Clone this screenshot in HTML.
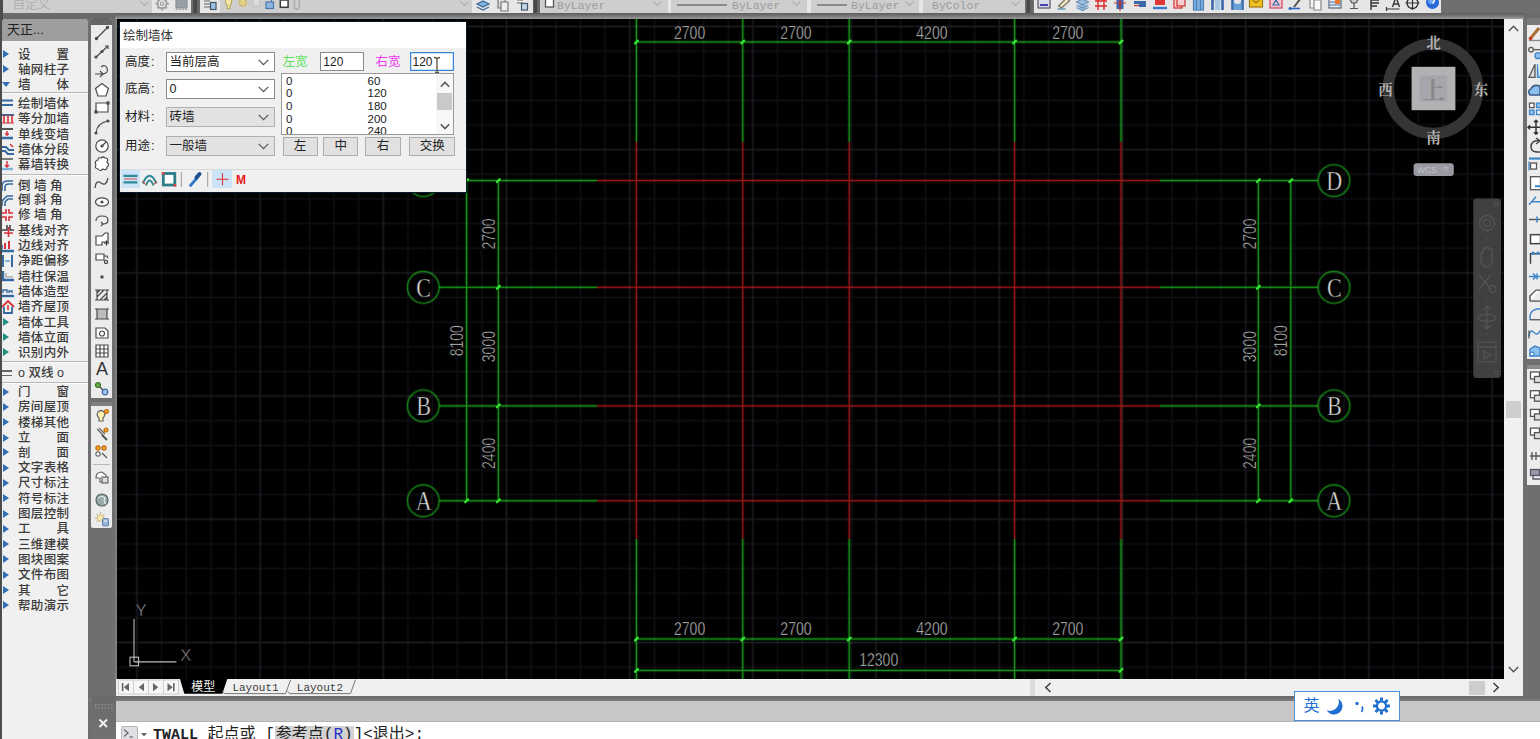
<!DOCTYPE html>
<html lang="zh"><head><meta charset="utf-8"><title>绘制墙体</title>
<style>
html,body{margin:0;padding:0}
body{width:1540px;height:739px;overflow:hidden;position:relative;background:#6f6f6f;font-family:"Liberation Sans","Noto Sans CJK SC",sans-serif;font-size:12.5px;color:#222}
.abs{position:absolute}
#top{left:0;top:0;width:1540px;height:13px;background:#6f6f6f;overflow:hidden}
#top .seg{position:absolute;top:0;height:13px}
#top .t{position:absolute;top:-1.5px;font-family:"Liberation Mono",monospace;font-size:11.5px;color:#9c9c9c;line-height:13px;white-space:nowrap}
#lp{left:2px;top:19px;width:86px;height:720px;background:#f0f0f0;border-radius:4px 4px 0 0;overflow:hidden}
#lp .title{position:absolute;left:0;top:0;width:86px;height:22px;background:#9e9e9e;color:#222;font-size:13px;line-height:22px;text-indent:5px}
#lp .it{position:absolute;left:16px;width:51px;height:15px;line-height:15px;font-size:12.5px;color:#3c3c3c;font-weight:500;white-space:nowrap;text-align:justify;text-align-last:justify}
#lp .sep{position:absolute;left:0;width:86px;height:1px;background:#b8b8b8;border-bottom:1px solid #fafafa}
#lp .ar{position:absolute;left:1px;width:0;height:0;border-left:6px solid #2f6fb5;border-top:4px solid transparent;border-bottom:4px solid transparent}
#lp .ad{position:absolute;left:0px;width:0;height:0;border-top:5px solid #2f6fb5;border-left:4.5px solid transparent;border-right:4.5px solid transparent}
#vt{left:91px;top:17.500px;width:21px;height:510.500px;background:#ececec;border-radius:2px}
#dlg{left:120px;top:22px;width:346px;height:170px;background:#f0f0f0;overflow:hidden;box-shadow:0 0 0 1px #0a1a2a}
#dlg .ttl{position:absolute;left:0;top:0;width:346px;height:26px;background:#fff;font-size:12.5px;line-height:28px;text-indent:3px;color:#333}
#dlg .lb{position:absolute;left:5px;font-size:12.5px;line-height:20px;color:#222;white-space:nowrap}
#dlg .cb{position:absolute;left:46px;width:107px;height:18px;border:1px solid #8a8a8a;background:#fff;font-size:12.5px;line-height:18px;text-indent:2.5px;color:#222;white-space:nowrap}
#dlg .cb.g{background:#e2e2e2;border-color:#b0b0b0}
#dlg .cb svg{position:absolute;right:5px;top:6px}
#dlg .in{position:absolute;top:30px;width:42px;height:17px;border:1px solid #8a8a8a;background:#fff;font-size:12px;line-height:19px;text-indent:2px}
#dlg .bt{position:absolute;top:115px;height:17px;border:1px solid #adadad;background:#e1e1e1;font-size:12.5px;line-height:17px;text-align:center;color:#222}
#lst{position:absolute;left:161px;top:51px;width:171px;height:60px;background:#fff;border:1px solid #9a9a9a;overflow:hidden;font-size:11.5px;color:#222}
#lst div.r{position:absolute;left:4px;height:13px;line-height:13px;white-space:pre}
#cmd{left:116px;top:722px;width:1424px;height:17px;background:#fff;overflow:hidden}
#cmd .tx{position:absolute;left:37px;top:2.600px;font-family:"Liberation Mono","Noto Sans CJK SC",monospace;font-size:16px;line-height:20px;color:#222;white-space:nowrap}
</style></head><body>

<div id="top" class="abs">
<div class="seg" style="left:0px;width:2.5px;background:#4c4c4c"></div>
<div class="seg" style="left:2.5px;width:149.5px;background:#cecece"><span class="t" style="left:10px;font-family:'Liberation Sans','Noto Sans CJK SC',sans-serif;font-size:12.5px;color:#b0b0b0">自定义</span><svg class="abs" style="left:137px;top:1px" width="9" height="6" viewBox="0 0 9 6"><path d="M0.5 0.5L4.5 4.5L8.5 0.5" fill="none" stroke="#b0b0b0" stroke-width="1.2"/></svg></div>
<div class="seg" style="left:152px;width:39px;background:#e6e6e6"></div>
<div class="seg" style="left:200px;width:20px;background:#e6e6e6"></div>
<div class="seg" style="left:220px;width:252px;background:#cecece"><span class="t" style="left:72.500px;top:-2.500px;color:#a6a6a6;font-size:16px;font-family:'Liberation Sans',sans-serif;transform:scaleX(0.85);transform-origin:0 0">0</span><svg class="abs" style="left:240px;top:1px" width="9" height="6" viewBox="0 0 9 6"><path d="M0.5 0.5L4.5 4.5L8.5 0.5" fill="none" stroke="#b0b0b0" stroke-width="1.2"/></svg></div>
<div class="seg" style="left:472px;width:60.5px;background:#e6e6e6"></div>
<div class="seg" style="left:540px;width:127.5px;background:#cecece"><span class="t" style="left:17px">ByLayer</span><svg class="abs" style="left:113px;top:1px" width="9" height="6" viewBox="0 0 9 6"><path d="M0.5 0.5L4.5 4.5L8.5 0.5" fill="none" stroke="#b0b0b0" stroke-width="1.2"/></svg></div>
<div class="seg" style="left:667.5px;width:3.5px;background:#e6e6e6"></div>
<div class="seg" style="left:671px;width:136px;background:#cecece"><span class="t" style="left:61px">ByLayer</span><svg class="abs" style="left:121px;top:1px" width="9" height="6" viewBox="0 0 9 6"><path d="M0.5 0.5L4.5 4.5L8.5 0.5" fill="none" stroke="#b0b0b0" stroke-width="1.2"/></svg><div class="abs" style="left:6px;top:4px;width:50px;height:1.5px;background:#8a8a8a"></div></div>
<div class="seg" style="left:807px;width:4px;background:#e6e6e6"></div>
<div class="seg" style="left:811px;width:108px;background:#cecece"><span class="t" style="left:40px">ByLayer</span><svg class="abs" style="left:94px;top:1px" width="9" height="6" viewBox="0 0 9 6"><path d="M0.5 0.5L4.5 4.5L8.5 0.5" fill="none" stroke="#b0b0b0" stroke-width="1.2"/></svg><div class="abs" style="left:6px;top:4px;width:30px;height:1.5px;background:#8a8a8a"></div></div>
<div class="seg" style="left:919px;width:4px;background:#e6e6e6"></div>
<div class="seg" style="left:923px;width:102px;background:#cecece"><span class="t" style="left:9px">ByColor</span><svg class="abs" style="left:88px;top:1px" width="9" height="6" viewBox="0 0 9 6"><path d="M0.5 0.5L4.5 4.5L8.5 0.5" fill="none" stroke="#b0b0b0" stroke-width="1.2"/></svg></div>
<div class="seg" style="left:1033.5px;width:407.5px;background:#e6e6e6"></div>
</div>
<div class="abs" style="left:0;top:13px;width:1540px;height:6px;background:#6a6a6a"></div>
<div class="abs" style="left:115px;top:13px;width:1409px;height:6px;background:linear-gradient(#5c5c5c,#767676 50%,#9c9c9c)"></div>
<div class="abs" style="left:115px;top:19px;width:2.400px;height:660px;background:#7e7e7e"></div>
<div class="abs" style="left:0;top:13px;width:2.5px;height:726px;background:#4c4c4c"></div>
<div id="lp" class="abs"><div class="title">天正...</div>
<div class="it" style="top:28.5px">设置</div>
<div class="ar" style="top:31px"></div>
<div class="it" style="top:43.7px">轴网柱子</div>
<div class="ar" style="top:46.2px"></div>
<div class="it" style="top:58.9px">墙体</div>
<div class="ad" style="top:63.4px"></div>
<div class="it" style="top:77.5px">绘制墙体</div>
<div class="it" style="top:93px">等分加墙</div>
<div class="it" style="top:108.5px">单线变墙</div>
<div class="it" style="top:123.7px">墙体分段</div>
<div class="it" style="top:138.9px">幕墙转换</div>
<div class="it" style="top:159.5px;text-align:left;text-align-last:left;width:60px">倒 墙 角</div>
<div class="it" style="top:174.3px;text-align:left;text-align-last:left;width:60px">倒 斜 角</div>
<div class="it" style="top:189.3px;text-align:left;text-align-last:left;width:60px">修 墙 角</div>
<div class="it" style="top:205px">基线对齐</div>
<div class="it" style="top:220.3px">边线对齐</div>
<div class="it" style="top:235.2px">净距偏移</div>
<div class="it" style="top:250.8px">墙柱保温</div>
<div class="it" style="top:266px">墙体造型</div>
<div class="it" style="top:281.1px">墙齐屋顶</div>
<div class="it" style="top:296.5px">墙体工具</div>
<div class="ar" style="top:299px;border-left-color:#1f8f80"></div>
<div class="it" style="top:311.8px">墙体立面</div>
<div class="ar" style="top:314.3px;border-left-color:#1f8f80"></div>
<div class="it" style="top:326.9px">识别内外</div>
<div class="ar" style="top:329.4px;border-left-color:#1f8f80"></div>
<div class="it" style="top:366.3px">门窗</div>
<div class="ar" style="top:368.8px"></div>
<div class="it" style="top:381.4px">房间屋顶</div>
<div class="ar" style="top:383.9px"></div>
<div class="it" style="top:396.5px">楼梯其他</div>
<div class="ar" style="top:399px"></div>
<div class="it" style="top:412px">立面</div>
<div class="ar" style="top:414.5px"></div>
<div class="it" style="top:426.7px">剖面</div>
<div class="ar" style="top:429.2px"></div>
<div class="it" style="top:442px">文字表格</div>
<div class="ar" style="top:444.5px"></div>
<div class="it" style="top:457.4px">尺寸标注</div>
<div class="ar" style="top:459.9px"></div>
<div class="it" style="top:472.8px">符号标注</div>
<div class="ar" style="top:475.3px"></div>
<div class="it" style="top:488.2px">图层控制</div>
<div class="ar" style="top:490.7px"></div>
<div class="it" style="top:503.2px">工具</div>
<div class="ar" style="top:505.7px"></div>
<div class="it" style="top:518.5px">三维建模</div>
<div class="ar" style="top:521px"></div>
<div class="it" style="top:533.9px">图块图案</div>
<div class="ar" style="top:536.4px"></div>
<div class="it" style="top:549.3px">文件布图</div>
<div class="ar" style="top:551.8px"></div>
<div class="it" style="top:564.7px">其它</div>
<div class="ar" style="top:567.2px"></div>
<div class="it" style="top:579.7px">帮助演示</div>
<div class="ar" style="top:582.2px"></div>
<div class="it" style="top:347.2px;left:16px;width:66px;text-align:left;text-align-last:left">o 双线 o</div>
<div class="abs" style="left:0;top:351px;width:10px;height:1.5px;background:#666"></div><div class="abs" style="left:0;top:355.5px;width:10px;height:1.5px;background:#666"></div>
<div class="sep" style="top:72.5px"></div>
<div class="sep" style="top:155px"></div>
<div class="sep" style="top:341.5px"></div>
<div class="sep" style="top:362.5px"></div>
<svg class="abs" style="left:-1px;top:77px" width="16" height="14" viewBox="0 0 16 14"><path d="M0 4.5H12M0 9H12" stroke="#35699f" stroke-width="2.2"/></svg>
<svg class="abs" style="left:-1px;top:92.5px" width="16" height="14" viewBox="0 0 16 14"><path d="M0 3H13" stroke="#35699f" stroke-width="2"/><path d="M3 3V11M7 3V11M11 3V11" stroke="#d8303a" stroke-width="1.6"/><path d="M0 11H13" stroke="#d8303a" stroke-width="1.2"/></svg>
<svg class="abs" style="left:-1px;top:108px" width="16" height="14" viewBox="0 0 16 14"><path d="M0 2H12" stroke="#222" stroke-width="1.6"/><path d="M0 11H12" stroke="#35699f" stroke-width="2.4"/><path d="M6 4V9M4 7H8" stroke="#d8303a" stroke-width="1.4"/></svg>
<svg class="abs" style="left:-1px;top:123.2px" width="16" height="14" viewBox="0 0 16 14"><path d="M0 5H5L8 8H13M0 9H4L7 12H13" stroke="#35699f" stroke-width="2" fill="none"/><path d="M9 2L12 5" stroke="#d8303a" stroke-width="1.4"/></svg>
<svg class="abs" style="left:-1px;top:138.4px" width="16" height="14" viewBox="0 0 16 14"><path d="M0 2H12" stroke="#555" stroke-width="1.6"/><path d="M0 12H12" stroke="#7fb4d8" stroke-width="2.4"/><path d="M6 4V10M4 8L6 10L8 8" stroke="#d8303a" stroke-width="1.4" fill="none"/></svg>
<svg class="abs" style="left:-1px;top:159px" width="16" height="14" viewBox="0 0 16 14"><path d="M1 13V8Q1 3 7 3H12M4 13V9Q4 6 8 6H12" stroke="#35699f" stroke-width="1.6" fill="none"/></svg>
<svg class="abs" style="left:-1px;top:173.8px" width="16" height="14" viewBox="0 0 16 14"><path d="M1 13V8L6 3H12M4 13V9L7 6H12" stroke="#35699f" stroke-width="1.6" fill="none"/></svg>
<svg class="abs" style="left:-1px;top:188.8px" width="16" height="14" viewBox="0 0 16 14"><path d="M0 5H5V1M8 1V5H12M0 9H5V13M8 13V9H12" stroke="#d8303a" stroke-width="1.6" fill="none"/></svg>
<svg class="abs" style="left:-1px;top:204.5px" width="16" height="14" viewBox="0 0 16 14"><path d="M0 6H6V1M9 1V6H13" stroke="#444" stroke-width="1.6" fill="none"/><path d="M7.5 3V13M3 9H12" stroke="#d8303a" stroke-width="1.6"/></svg>
<svg class="abs" style="left:-1px;top:219.8px" width="16" height="14" viewBox="0 0 16 14"><path d="M0 12H13" stroke="#35699f" stroke-width="2.4"/><path d="M4 4V10M8 2V10" stroke="#d8303a" stroke-width="2"/><path d="M1 6V10" stroke="#35699f" stroke-width="1.6"/></svg>
<svg class="abs" style="left:-1px;top:234.7px" width="16" height="14" viewBox="0 0 16 14"><path d="M2 1V13M11 1V13" stroke="#35699f" stroke-width="2"/><path d="M4 7H9" stroke="#6aa8d8" stroke-width="1.6"/></svg>
<svg class="abs" style="left:-1px;top:250.3px" width="16" height="14" viewBox="0 0 16 14"><path d="M2 2V11H13" stroke="#35699f" stroke-width="2.4" fill="none"/><path d="M5 4V8H12" stroke="#b0b0b0" stroke-width="1.6" fill="none"/></svg>
<svg class="abs" style="left:-1px;top:265.5px" width="16" height="14" viewBox="0 0 16 14"><path d="M0 11H13" stroke="#35699f" stroke-width="2.4"/><path d="M2 8V5H6V8M8 8V6H11V8" stroke="#35699f" stroke-width="1.4" fill="none"/></svg>
<svg class="abs" style="left:-1px;top:280.6px" width="16" height="14" viewBox="0 0 16 14"><path d="M1 7L7 1L13 7" stroke="#d8303a" stroke-width="1.8" fill="none"/><path d="M3 7V13H11V7" stroke="#35699f" stroke-width="1.8" fill="none"/><path d="M7 5V10" stroke="#d8303a" stroke-width="1.6"/></svg>
</div>
<div id="vt" class="abs"><div class="abs" style="left:0;top:0;width:21px;height:7px;background:#666;border-radius:2px 2px 0 0"></div>
<svg class="abs" style="left:3px;top:7.9px" width="16" height="16" viewBox="0 0 16 16" fill="none" stroke="#4a4a4a" stroke-width="1.2"><path d="M2.500 13.500L13.500 2.500"/><circle cx="2.500" cy="13.500" r="1.100" fill="#444"/><circle cx="13.500" cy="2.500" r="1.100" fill="#444"/></svg>
<svg class="abs" style="left:3px;top:26.6px" width="16" height="16" viewBox="0 0 16 16" fill="none" stroke="#4a4a4a" stroke-width="1.2"><path d="M2 13L14 2"/><circle cx="2" cy="13" r="1" fill="#444"/><circle cx="8" cy="7.5" r="1" fill="#444"/><path d="M11 2H14V5"/></svg>
<svg class="abs" style="left:3px;top:45.3px" width="16" height="16" viewBox="0 0 16 16" fill="none" stroke="#4a4a4a" stroke-width="1.2"><path d="M1 11H9M6 8L9 11L6 14"/><path d="M9 11Q15 10 13 5Q11 1 7 4"/></svg>
<svg class="abs" style="left:3px;top:64px" width="16" height="16" viewBox="0 0 16 16" fill="none" stroke="#4a4a4a" stroke-width="1.2"><path d="M8 1.5L14.5 6.5L12 14H4L1.5 6.5Z" fill="#fff"/></svg>
<svg class="abs" style="left:3px;top:82.7px" width="16" height="16" viewBox="0 0 16 16" fill="none" stroke="#4a4a4a" stroke-width="1.2"><path d="M2 3H14V12H2Z" fill="#fff"/><rect x="1" y="11" width="2" height="2" fill="#444"/><rect x="13" y="2" width="2" height="2" fill="#444"/></svg>
<svg class="abs" style="left:3px;top:101.4px" width="16" height="16" viewBox="0 0 16 16" fill="none" stroke="#4a4a4a" stroke-width="1.2"><path d="M2 14Q3 4 14 2"/><circle cx="2" cy="14" r="1" fill="#444"/><circle cx="14" cy="2" r="1" fill="#444"/></svg>
<svg class="abs" style="left:3px;top:120.1px" width="16" height="16" viewBox="0 0 16 16" fill="none" stroke="#4a4a4a" stroke-width="1.2"><circle cx="8" cy="8" r="6.2" fill="#fff"/><path d="M8 8L12 4"/><circle cx="8" cy="8" r="1" fill="#444"/></svg>
<svg class="abs" style="left:3px;top:138.8px" width="16" height="16" viewBox="0 0 16 16" fill="none" stroke="#4a4a4a" stroke-width="1.2"><path d="M4 4Q4 1 7 2Q9 0 11 2Q15 2 13 6Q16 9 13 11Q13 15 9 13Q6 16 4 13Q0 12 2 9Q0 5 4 4Z" fill="#fff"/></svg>
<svg class="abs" style="left:3px;top:157.5px" width="16" height="16" viewBox="0 0 16 16" fill="none" stroke="#4a4a4a" stroke-width="1.2"><path d="M1 13Q2 4 7 8T14 3"/></svg>
<svg class="abs" style="left:3px;top:176.2px" width="16" height="16" viewBox="0 0 16 16" fill="none" stroke="#4a4a4a" stroke-width="1.2"><ellipse cx="8" cy="8" rx="6.5" ry="4.2" fill="#fff"/><circle cx="8" cy="8" r="1" fill="#444"/></svg>
<svg class="abs" style="left:3px;top:194.9px" width="16" height="16" viewBox="0 0 16 16" fill="none" stroke="#4a4a4a" stroke-width="1.2"><path d="M2 9Q2 4 8 4Q14 4 14 8Q14 12 9 12"/><path d="M7 10L9 12L7 14"/></svg>
<svg class="abs" style="left:3px;top:213.6px" width="16" height="16" viewBox="0 0 16 16" fill="none" stroke="#4a4a4a" stroke-width="1.2"><path d="M2 5H8L11 2H14V11H8V14H2Z" fill="#fff"/><path d="M10 12H15M12.5 9.5V14.5" stroke="#333"/></svg>
<svg class="abs" style="left:3px;top:232.3px" width="16" height="16" viewBox="0 0 16 16" fill="none" stroke="#4a4a4a" stroke-width="1.2"><path d="M2 4H10V10H2Z" fill="#fff"/><path d="M10 6H13L14 8"/><circle cx="12" cy="12" r="1.6"/></svg>
<svg class="abs" style="left:3px;top:251px" width="16" height="16" viewBox="0 0 16 16" fill="none" stroke="#4a4a4a" stroke-width="1.2"><circle cx="8" cy="8" r="1.1" fill="#444"/></svg>
<svg class="abs" style="left:3px;top:269.7px" width="16" height="16" viewBox="0 0 16 16" fill="none" stroke="#4a4a4a" stroke-width="1.2"><path d="M3 3H13V13H3Z M3 6L6 3M3 10L10 3M6 13L13 6M10 13L13 10"/><path d="M1 3H3M13 3H15M1 13H3M13 13H15"/></svg>
<svg class="abs" style="left:3px;top:288.4px" width="16" height="16" viewBox="0 0 16 16" fill="none" stroke="#4a4a4a" stroke-width="1.2"><path d="M3 3H13V13H3Z" fill="#bbb"/><path d="M1 3H3M13 3H15M1 13H3M13 13H15"/></svg>
<svg class="abs" style="left:3px;top:307.1px" width="16" height="16" viewBox="0 0 16 16" fill="none" stroke="#4a4a4a" stroke-width="1.2"><path d="M2 3H11L14 6V13H2Z" fill="#fff"/><circle cx="8" cy="8.5" r="2.5"/></svg>
<svg class="abs" style="left:3px;top:325.8px" width="16" height="16" viewBox="0 0 16 16" fill="none" stroke="#4a4a4a" stroke-width="1.2"><path d="M2 2H14V14H2ZM2 6H14M2 10H14M6 2V14M10 2V14" fill="#fff"/></svg>
<div class="abs" style="left:3px;top:342.5px;width:16px;height:18px;font-size:18px;line-height:18px;text-align:center;color:#333">A</div>
<svg class="abs" style="left:3px;top:363.2px" width="16" height="16" viewBox="0 0 16 16" fill="none" stroke="#4a4a4a" stroke-width="1.2"><circle cx="4" cy="4" r="2.5" fill="#6aa84f" stroke="#38761d"/><circle cx="11" cy="11" r="2.8" fill="#9fc5e8" stroke="#3d6fa8"/><path d="M6 6L9 9"/></svg>
<div class="abs" style="left:0;top:380px;width:21px;height:7px;background:#6f6f6f"></div>
<div class="abs" style="left:0;top:384px;width:21px;height:4px;background:#808080;border-radius:2px 2px 0 0"></div>
<svg class="abs" style="left:3px;top:390.3px" width="16" height="16" viewBox="0 0 16 16" fill="none" stroke="#4a4a4a" stroke-width="1.2"><path d="M5 10Q2 7 4 4Q7 1 10 4Q12 7 9 10V13H5Z" fill="#fff2b0" stroke="#666"/><circle cx="12.5" cy="3.5" r="2" fill="#f6a030" stroke="#c07010"/></svg>
<svg class="abs" style="left:3px;top:408.5px" width="16" height="16" viewBox="0 0 16 16" fill="none" stroke="#4a4a4a" stroke-width="1.2"><path d="M3 3L9 9M5 2L11 8" stroke="#666"/><path d="M8 9L13 14" stroke="#555" stroke-width="2"/><circle cx="12" cy="4" r="2" fill="#f6a030" stroke="#c07010"/></svg>
<svg class="abs" style="left:3px;top:426.5px" width="16" height="16" viewBox="0 0 16 16" fill="none" stroke="#4a4a4a" stroke-width="1.2"><circle cx="4" cy="4" r="2.2" fill="#f6a030" stroke="#c07010"/><circle cx="10" cy="4" r="2.2" fill="#f6a030" stroke="#c07010"/><circle cx="4" cy="10" r="2.2" fill="#fff" stroke="#666"/><path d="M8 9L13 14" stroke="#555"/></svg>
<div class="abs" style="left:2px;top:446px;width:17px;height:1px;background:#b8b8b8"></div>
<svg class="abs" style="left:3px;top:451.7px" width="16" height="16" viewBox="0 0 16 16" fill="none" stroke="#4a4a4a" stroke-width="1.2"><path d="M2 9Q2 3 8 3L12 6V13H6V9Z" fill="#fff" stroke="#666"/><rect x="8" y="8" width="6" height="6" fill="#ddd" stroke="#666"/></svg>
<svg class="abs" style="left:3px;top:474.5px" width="16" height="16" viewBox="0 0 16 16" fill="none" stroke="#4a4a4a" stroke-width="1.2"><circle cx="8" cy="8" r="6" fill="#9aa" stroke="#566"/><path d="M4 6Q8 3 11 6Q9 10 12 12" stroke="#e8f0f0"/></svg>
<svg class="abs" style="left:3px;top:493.5px" width="16" height="16" viewBox="0 0 16 16" fill="none" stroke="#4a4a4a" stroke-width="1.2"><circle cx="6.500" cy="7" r="3.300" fill="#f4eab0" stroke="#c8b870" stroke-width="0.800"/><path d="M6.500 1V3M1 7H3M2.500 3L4 4.500M10.500 3L9 4.500M2.500 11L4 9.500" stroke="#b8a860" stroke-width="0.900"/><rect x="8.500" y="7.500" width="6" height="7.500" rx="1" fill="#9ab4dc" stroke="#5a78a8" stroke-width="0.900"/><path d="M10 10H13" stroke="#fff" stroke-width="1"/></svg>
</div>
<svg class="abs" style="left:117px;top:19px;background:#000" width="1386.5" height="660" viewBox="117 19 1386.5 660"><g opacity="0.999">
<path d="M112.31 19 V679 M161.59 19 V679 M186.23 19 V679 M210.87 19 V679 M235.51 19 V679 M284.79 19 V679 M309.43 19 V679 M334.07 19 V679 M358.71 19 V679 M407.99 19 V679 M432.63 19 V679 M457.27 19 V679 M481.91 19 V679 M531.19 19 V679 M555.83 19 V679 M580.47 19 V679 M605.11 19 V679 M654.39 19 V679 M679.03 19 V679 M703.67 19 V679 M728.31 19 V679 M777.59 19 V679 M802.23 19 V679 M826.87 19 V679 M851.51 19 V679 M900.79 19 V679 M925.43 19 V679 M950.07 19 V679 M974.71 19 V679 M1023.99 19 V679 M1048.63 19 V679 M1073.27 19 V679 M1097.91 19 V679 M1147.19 19 V679 M1171.83 19 V679 M1196.47 19 V679 M1221.11 19 V679 M1270.39 19 V679 M1295.03 19 V679 M1319.67 19 V679 M1344.31 19 V679 M1393.59 19 V679 M1418.23 19 V679 M1442.87 19 V679 M1467.51 19 V679 M117 1.86 H1503.5 M117 51.14 H1503.5 M117 75.78 H1503.5 M117 100.42 H1503.5 M117 125.06 H1503.5 M117 174.34 H1503.5 M117 198.98 H1503.5 M117 223.62 H1503.5 M117 248.26 H1503.5 M117 297.54 H1503.5 M117 322.18 H1503.5 M117 346.82 H1503.5 M117 371.46 H1503.5 M117 420.74 H1503.5 M117 445.38 H1503.5 M117 470.02 H1503.5 M117 494.66 H1503.5 M117 543.94 H1503.5 M117 568.58 H1503.5 M117 593.22 H1503.5 M117 617.86 H1503.5 M117 667.14 H1503.5" stroke="#1e1e26" stroke-width="3" stroke-opacity="0.2" fill="none"/>
<path d="M112.31 19 V679 M161.59 19 V679 M186.23 19 V679 M210.87 19 V679 M235.51 19 V679 M284.79 19 V679 M309.43 19 V679 M334.07 19 V679 M358.71 19 V679 M407.99 19 V679 M432.63 19 V679 M457.27 19 V679 M481.91 19 V679 M531.19 19 V679 M555.83 19 V679 M580.47 19 V679 M605.11 19 V679 M654.39 19 V679 M679.03 19 V679 M703.67 19 V679 M728.31 19 V679 M777.59 19 V679 M802.23 19 V679 M826.87 19 V679 M851.51 19 V679 M900.79 19 V679 M925.43 19 V679 M950.07 19 V679 M974.71 19 V679 M1023.99 19 V679 M1048.63 19 V679 M1073.27 19 V679 M1097.91 19 V679 M1147.19 19 V679 M1171.83 19 V679 M1196.47 19 V679 M1221.11 19 V679 M1270.39 19 V679 M1295.03 19 V679 M1319.67 19 V679 M1344.31 19 V679 M1393.59 19 V679 M1418.23 19 V679 M1442.87 19 V679 M1467.51 19 V679 M117 1.86 H1503.5 M117 51.14 H1503.5 M117 75.78 H1503.5 M117 100.42 H1503.5 M117 125.06 H1503.5 M117 174.34 H1503.5 M117 198.98 H1503.5 M117 223.62 H1503.5 M117 248.26 H1503.5 M117 297.54 H1503.5 M117 322.18 H1503.5 M117 346.82 H1503.5 M117 371.46 H1503.5 M117 420.74 H1503.5 M117 445.38 H1503.5 M117 470.02 H1503.5 M117 494.66 H1503.5 M117 543.94 H1503.5 M117 568.58 H1503.5 M117 593.22 H1503.5 M117 617.86 H1503.5 M117 667.14 H1503.5" stroke="#1e1e26" stroke-width="1" stroke-opacity="0.4" fill="none"/>
<path d="M136.95 19 V679 M260.15 19 V679 M383.35 19 V679 M506.55 19 V679 M629.75 19 V679 M752.95 19 V679 M876.15 19 V679 M999.35 19 V679 M1122.55 19 V679 M1245.75 19 V679 M1368.95 19 V679 M1492.15 19 V679 M117 26.50 H1503.5 M117 149.70 H1503.5 M117 272.90 H1503.5 M117 396.10 H1503.5 M117 519.30 H1503.5 M117 642.50 H1503.5" stroke="#34343f" stroke-width="3" stroke-opacity="0.2" fill="none"/>
<path d="M136.95 19 V679 M260.15 19 V679 M383.35 19 V679 M506.55 19 V679 M629.75 19 V679 M752.95 19 V679 M876.15 19 V679 M999.35 19 V679 M1122.55 19 V679 M1245.75 19 V679 M1368.95 19 V679 M1492.15 19 V679 M117 26.50 H1503.5 M117 149.70 H1503.5 M117 272.90 H1503.5 M117 396.10 H1503.5 M117 519.30 H1503.5 M117 642.50 H1503.5" stroke="#34343f" stroke-width="1" stroke-opacity="0.4" fill="none"/>
<path d="M636.4 142 V539 M742.8 142 V539 M849.2 142 V539 M1014.6 142 V539 M1121.0 142 V539 M597 180.6 H1160 M597 287.3 H1160 M597 405.9 H1160 M597 500.8 H1160" stroke="#d42020" stroke-width="5" stroke-opacity="0.03" fill="none"/>
<path d="M636.4 142 V539 M742.8 142 V539 M849.2 142 V539 M1014.6 142 V539 M1121.0 142 V539 M597 180.6 H1160 M597 287.3 H1160 M597 405.9 H1160 M597 500.8 H1160" stroke="#d42020" stroke-width="3" stroke-opacity="0.2" fill="none"/>
<path d="M636.4 142 V539 M742.8 142 V539 M849.2 142 V539 M1014.6 142 V539 M1121.0 142 V539 M597 180.6 H1160 M597 287.3 H1160 M597 405.9 H1160 M597 500.8 H1160" stroke="#d42020" stroke-width="1" stroke-opacity="0.68" fill="none"/>
<path d="M636.4 19 V142 M636.4 539 V679 M742.8 19 V142 M742.8 539 V679 M849.2 19 V142 M849.2 539 V679 M1014.6 19 V142 M1014.6 539 V679 M1121.0 19 V142 M1121.0 539 V679 M439.2 180.6 H597 M1160 180.6 H1318.0 M439.2 287.3 H597 M1160 287.3 H1318.0 M439.2 405.9 H597 M1160 405.9 H1318.0 M439.2 500.8 H597 M1160 500.8 H1318.0 M466.6 180.6 V500.8 M498.3 180.6 V500.8 M1258.3 180.6 V500.8 M1290.8 180.6 V500.8 M636.4 42 H1121.0 M636.4 639 H1121.0 M636.4 670.4 H1121.0" stroke="#22d222" stroke-width="5" stroke-opacity="0.03" fill="none"/>
<path d="M636.4 19 V142 M636.4 539 V679 M742.8 19 V142 M742.8 539 V679 M849.2 19 V142 M849.2 539 V679 M1014.6 19 V142 M1014.6 539 V679 M1121.0 19 V142 M1121.0 539 V679 M439.2 180.6 H597 M1160 180.6 H1318.0 M439.2 287.3 H597 M1160 287.3 H1318.0 M439.2 405.9 H597 M1160 405.9 H1318.0 M439.2 500.8 H597 M1160 500.8 H1318.0 M466.6 180.6 V500.8 M498.3 180.6 V500.8 M1258.3 180.6 V500.8 M1290.8 180.6 V500.8 M636.4 42 H1121.0 M636.4 639 H1121.0 M636.4 670.4 H1121.0" stroke="#22d222" stroke-width="3" stroke-opacity="0.2" fill="none"/>
<path d="M636.4 19 V142 M636.4 539 V679 M742.8 19 V142 M742.8 539 V679 M849.2 19 V142 M849.2 539 V679 M1014.6 19 V142 M1014.6 539 V679 M1121.0 19 V142 M1121.0 539 V679 M439.2 180.6 H597 M1160 180.6 H1318.0 M439.2 287.3 H597 M1160 287.3 H1318.0 M439.2 405.9 H597 M1160 405.9 H1318.0 M439.2 500.8 H597 M1160 500.8 H1318.0 M466.6 180.6 V500.8 M498.3 180.6 V500.8 M1258.3 180.6 V500.8 M1290.8 180.6 V500.8 M636.4 42 H1121.0 M636.4 639 H1121.0 M636.4 670.4 H1121.0" stroke="#22d222" stroke-width="1" stroke-opacity="0.68" fill="none"/>
<path d="M635.0 43.4 L637.8 40.6 M635.0 640.4 L637.8 637.6 M741.4 43.4 L744.2 40.6 M741.4 640.4 L744.2 637.6 M847.8 43.4 L850.6 40.6 M847.8 640.4 L850.6 637.6 M1013.2 43.4 L1016.0 40.6 M1013.2 640.4 L1016.0 637.6 M1119.6 43.4 L1122.4 40.6 M1119.6 640.4 L1122.4 637.6 M635.0 671.8 L637.8 669.0 M1119.6 671.8 L1122.4 669.0 M496.9 182.0 L499.7 179.2 M1256.9 182.0 L1259.7 179.2 M496.9 288.7 L499.7 285.9 M1256.9 288.7 L1259.7 285.9 M496.9 407.3 L499.7 404.5 M1256.9 407.3 L1259.7 404.5 M496.9 502.2 L499.7 499.4 M1256.9 502.2 L1259.7 499.4 M465.2 182.0 L468.0 179.2 M1289.4 182.0 L1292.2 179.2 M465.2 502.2 L468.0 499.4 M1289.4 502.2 L1292.2 499.4" stroke="#34e834" stroke-width="2.2" stroke-linecap="round" fill="none"/>
<circle cx="423.3" cy="180.6" r="15.9" fill="none" stroke="#22d222" stroke-width="3" stroke-opacity="0.2"/>
<circle cx="423.3" cy="180.6" r="15.9" fill="none" stroke="#22d222" stroke-width="1.1" stroke-opacity="0.45"/>
<text transform="translate(423.7 189.9) scale(0.82 1)" text-anchor="middle" font-family="'Liberation Serif',serif" font-size="27" fill="#e0e0e0" stroke="#000" stroke-width="0.5" paint-order="fill stroke">D</text>
<circle cx="1333.9" cy="180.6" r="15.9" fill="none" stroke="#22d222" stroke-width="3" stroke-opacity="0.2"/>
<circle cx="1333.9" cy="180.6" r="15.9" fill="none" stroke="#22d222" stroke-width="1.1" stroke-opacity="0.45"/>
<text transform="translate(1334.3 189.9) scale(0.82 1)" text-anchor="middle" font-family="'Liberation Serif',serif" font-size="27" fill="#e0e0e0" stroke="#000" stroke-width="0.5" paint-order="fill stroke">D</text>
<circle cx="423.3" cy="287.3" r="15.9" fill="none" stroke="#22d222" stroke-width="3" stroke-opacity="0.2"/>
<circle cx="423.3" cy="287.3" r="15.9" fill="none" stroke="#22d222" stroke-width="1.1" stroke-opacity="0.45"/>
<text transform="translate(423.7 296.6) scale(0.82 1)" text-anchor="middle" font-family="'Liberation Serif',serif" font-size="27" fill="#e0e0e0" stroke="#000" stroke-width="0.5" paint-order="fill stroke">C</text>
<circle cx="1333.9" cy="287.3" r="15.9" fill="none" stroke="#22d222" stroke-width="3" stroke-opacity="0.2"/>
<circle cx="1333.9" cy="287.3" r="15.9" fill="none" stroke="#22d222" stroke-width="1.1" stroke-opacity="0.45"/>
<text transform="translate(1334.3 296.6) scale(0.82 1)" text-anchor="middle" font-family="'Liberation Serif',serif" font-size="27" fill="#e0e0e0" stroke="#000" stroke-width="0.5" paint-order="fill stroke">C</text>
<circle cx="423.3" cy="405.9" r="15.9" fill="none" stroke="#22d222" stroke-width="3" stroke-opacity="0.2"/>
<circle cx="423.3" cy="405.9" r="15.9" fill="none" stroke="#22d222" stroke-width="1.1" stroke-opacity="0.45"/>
<text transform="translate(423.7 415.2) scale(0.82 1)" text-anchor="middle" font-family="'Liberation Serif',serif" font-size="27" fill="#e0e0e0" stroke="#000" stroke-width="0.5" paint-order="fill stroke">B</text>
<circle cx="1333.9" cy="405.9" r="15.9" fill="none" stroke="#22d222" stroke-width="3" stroke-opacity="0.2"/>
<circle cx="1333.9" cy="405.9" r="15.9" fill="none" stroke="#22d222" stroke-width="1.1" stroke-opacity="0.45"/>
<text transform="translate(1334.3 415.2) scale(0.82 1)" text-anchor="middle" font-family="'Liberation Serif',serif" font-size="27" fill="#e0e0e0" stroke="#000" stroke-width="0.5" paint-order="fill stroke">B</text>
<circle cx="423.3" cy="500.8" r="15.9" fill="none" stroke="#22d222" stroke-width="3" stroke-opacity="0.2"/>
<circle cx="423.3" cy="500.8" r="15.9" fill="none" stroke="#22d222" stroke-width="1.1" stroke-opacity="0.45"/>
<text transform="translate(423.7 510.1) scale(0.82 1)" text-anchor="middle" font-family="'Liberation Serif',serif" font-size="27" fill="#e0e0e0" stroke="#000" stroke-width="0.5" paint-order="fill stroke">A</text>
<circle cx="1333.9" cy="500.8" r="15.9" fill="none" stroke="#22d222" stroke-width="3" stroke-opacity="0.2"/>
<circle cx="1333.9" cy="500.8" r="15.9" fill="none" stroke="#22d222" stroke-width="1.1" stroke-opacity="0.45"/>
<text transform="translate(1334.3 510.1) scale(0.82 1)" text-anchor="middle" font-family="'Liberation Serif',serif" font-size="27" fill="#e0e0e0" stroke="#000" stroke-width="0.5" paint-order="fill stroke">A</text>
<text transform="translate(689.588 38.8) scale(0.78 1)" text-anchor="middle" font-family="'Liberation Sans',sans-serif" font-size="18" fill="#d6d6d6" stroke="#000" stroke-width="0.55" paint-order="fill stroke">2700</text>
<text transform="translate(795.963 38.8) scale(0.78 1)" text-anchor="middle" font-family="'Liberation Sans',sans-serif" font-size="18" fill="#d6d6d6" stroke="#000" stroke-width="0.55" paint-order="fill stroke">2700</text>
<text transform="translate(931.888 38.8) scale(0.78 1)" text-anchor="middle" font-family="'Liberation Sans',sans-serif" font-size="18" fill="#d6d6d6" stroke="#000" stroke-width="0.55" paint-order="fill stroke">4200</text>
<text transform="translate(1067.81 38.8) scale(0.78 1)" text-anchor="middle" font-family="'Liberation Sans',sans-serif" font-size="18" fill="#d6d6d6" stroke="#000" stroke-width="0.55" paint-order="fill stroke">2700</text>
<text transform="translate(689.588 634.9) scale(0.78 1)" text-anchor="middle" font-family="'Liberation Sans',sans-serif" font-size="18" fill="#d6d6d6" stroke="#000" stroke-width="0.55" paint-order="fill stroke">2700</text>
<text transform="translate(795.963 634.9) scale(0.78 1)" text-anchor="middle" font-family="'Liberation Sans',sans-serif" font-size="18" fill="#d6d6d6" stroke="#000" stroke-width="0.55" paint-order="fill stroke">2700</text>
<text transform="translate(931.888 634.9) scale(0.78 1)" text-anchor="middle" font-family="'Liberation Sans',sans-serif" font-size="18" fill="#d6d6d6" stroke="#000" stroke-width="0.55" paint-order="fill stroke">4200</text>
<text transform="translate(1067.81 634.9) scale(0.78 1)" text-anchor="middle" font-family="'Liberation Sans',sans-serif" font-size="18" fill="#d6d6d6" stroke="#000" stroke-width="0.55" paint-order="fill stroke">2700</text>
<text transform="translate(878.7 666) scale(0.78 1)" text-anchor="middle" font-family="'Liberation Sans',sans-serif" font-size="18" fill="#d6d6d6" stroke="#000" stroke-width="0.55" paint-order="fill stroke">12300</text>
<text transform="translate(494.6 233.95) rotate(-90) scale(0.78 1)" text-anchor="middle" font-family="'Liberation Sans',sans-serif" font-size="18" fill="#d6d6d6" stroke="#000" stroke-width="0.55" paint-order="fill stroke">2700</text>
<text transform="translate(494.6 346.6) rotate(-90) scale(0.78 1)" text-anchor="middle" font-family="'Liberation Sans',sans-serif" font-size="18" fill="#d6d6d6" stroke="#000" stroke-width="0.55" paint-order="fill stroke">3000</text>
<text transform="translate(494.6 453.35) rotate(-90) scale(0.78 1)" text-anchor="middle" font-family="'Liberation Sans',sans-serif" font-size="18" fill="#d6d6d6" stroke="#000" stroke-width="0.55" paint-order="fill stroke">2400</text>
<text transform="translate(1255.6 233.95) rotate(-90) scale(0.78 1)" text-anchor="middle" font-family="'Liberation Sans',sans-serif" font-size="18" fill="#d6d6d6" stroke="#000" stroke-width="0.55" paint-order="fill stroke">2700</text>
<text transform="translate(1255.6 346.6) rotate(-90) scale(0.78 1)" text-anchor="middle" font-family="'Liberation Sans',sans-serif" font-size="18" fill="#d6d6d6" stroke="#000" stroke-width="0.55" paint-order="fill stroke">3000</text>
<text transform="translate(1255.6 453.35) rotate(-90) scale(0.78 1)" text-anchor="middle" font-family="'Liberation Sans',sans-serif" font-size="18" fill="#d6d6d6" stroke="#000" stroke-width="0.55" paint-order="fill stroke">2400</text>
<text transform="translate(463 340.7) rotate(-90) scale(0.78 1)" text-anchor="middle" font-family="'Liberation Sans',sans-serif" font-size="18" fill="#d6d6d6" stroke="#000" stroke-width="0.55" paint-order="fill stroke">8100</text>
<text transform="translate(1287.4 340.7) rotate(-90) scale(0.78 1)" text-anchor="middle" font-family="'Liberation Sans',sans-serif" font-size="18" fill="#d6d6d6" stroke="#000" stroke-width="0.55" paint-order="fill stroke">8100</text>
<g stroke="#d0d0d0" stroke-width="1.1" fill="none" stroke-opacity="0.9"><path d="M134 661.900V619M134 661.900H176.500"/><rect x="130" y="657.200" width="8.600" height="8.600"/></g>
<text transform="translate(141 615.8) scale(1.08 1)" text-anchor="middle" font-family="'Liberation Sans',sans-serif" font-size="16" fill="#d4d4d4" stroke="#000" stroke-width="0.700" paint-order="fill stroke">Y</text>
<text transform="translate(185.65 660.9) scale(1.08 1)" text-anchor="middle" font-family="'Liberation Sans',sans-serif" font-size="16" fill="#d4d4d4" stroke="#000" stroke-width="0.700" paint-order="fill stroke">X</text>
<circle cx="1433" cy="88.7" r="44.7" fill="none" stroke="#343434" stroke-width="11.2"/>
<rect x="1411.6" y="66.8" width="43.8" height="43.4" fill="#b2b2b4"/><rect x="1419.7" y="75.5" width="27.5" height="26" fill="#a6a6aa"/>
<text x="1433.5" y="98" text-anchor="middle" font-family="'Liberation Serif','Noto Serif CJK SC',serif" font-size="23" font-weight="bold" fill="#88888b">上</text>
<text x="1433.5" y="47.5" text-anchor="middle" font-family="'Liberation Serif','Noto Serif CJK SC',serif" font-weight="bold" font-size="14.5" fill="#b2b2b2">北</text>
<text x="1433.5" y="143.2" text-anchor="middle" font-family="'Liberation Serif','Noto Serif CJK SC',serif" font-weight="bold" font-size="14.5" fill="#b2b2b2">南</text>
<text x="1385.6" y="94.5" text-anchor="middle" font-family="'Liberation Serif','Noto Serif CJK SC',serif" font-weight="bold" font-size="14.5" fill="#b2b2b2">西</text>
<text x="1481" y="94.5" text-anchor="middle" font-family="'Liberation Serif','Noto Serif CJK SC',serif" font-weight="bold" font-size="14.5" fill="#b2b2b2">东</text>
<rect x="1413.6" y="163.2" width="40.2" height="12.8" rx="3" fill="#9a9aa2"/><text x="1417" y="173" font-family="'Liberation Sans',sans-serif" font-size="8.5" fill="#c2c2ca">WCS</text><path d="M1443.2 167.5H1448.2L1445.7 171Z" fill="none" stroke="#b8b8c0" stroke-width="0.8"/>
<rect x="1473.3" y="198.5" width="27.7" height="179.5" rx="3" fill="#404040"/>
<g fill="none" stroke="#525252" stroke-width="1.4"><circle cx="1487" cy="223" r="7.5"/><circle cx="1487" cy="223" r="3.5"/><path d="M1481 262V254Q1481 252 1483 253V249Q1484.500 247 1486 249V247.500Q1487.500 246 1489 248V249Q1490.500 247.500 1492 249.500V261Q1491 267 1486 267Q1483 267 1481 262Z"/><path d="M1479 275L1491 289M1491 275L1479 289"/><circle cx="1492.500" cy="289" r="3.5"/><path d="M1487 306V329M1483 310L1487 306L1491 310M1483 325L1487 329L1491 325"/><ellipse cx="1487" cy="318" rx="9" ry="3.5"/><rect x="1478" y="342" width="18" height="20"/><path d="M1478 347H1496M1484 351L1491 355L1484 359Z"/></g>
<g fill="#4e4e4e"><circle cx="1487" cy="238" r="1"/><circle cx="1487" cy="299" r="1"/><circle cx="1487" cy="334" r="1"/></g>
<rect x="1494.500" y="201.500" width="3.5" height="3.5" fill="none" stroke="#555" stroke-width="0.8"/><rect x="1494.500" y="371" width="3.5" height="3.5" fill="none" stroke="#555" stroke-width="0.8"/>
</g></svg>
<div id="dlg" class="abs"><div class="ttl">绘制墙体</div>
<div class="lb" style="top:30.1px">高度<span style="letter-spacing:0;margin-left:1px">:</span></div>
<div class="cb" style="top:30.1px">当前层高<svg width="11" height="7" viewBox="0 0 11 7"><path d="M0.7 0.8L5.5 5.6L10.300 0.8" fill="none" stroke="#555" stroke-width="1.2"/></svg></div>
<div class="lb" style="top:57.3px">底高<span style="letter-spacing:0;margin-left:1px">:</span></div>
<div class="cb" style="top:57.3px">0<svg width="11" height="7" viewBox="0 0 11 7"><path d="M0.7 0.8L5.5 5.6L10.300 0.8" fill="none" stroke="#555" stroke-width="1.2"/></svg></div>
<div class="lb" style="top:84.8px">材料<span style="letter-spacing:0;margin-left:1px">:</span></div>
<div class="cb g" style="top:84.8px">砖墙<svg width="11" height="7" viewBox="0 0 11 7"><path d="M0.7 0.8L5.5 5.6L10.300 0.8" fill="none" stroke="#555" stroke-width="1.2"/></svg></div>
<div class="lb" style="top:113.5px">用途<span style="letter-spacing:0;margin-left:1px">:</span></div>
<div class="cb g" style="top:113.5px">一般墙<svg width="11" height="7" viewBox="0 0 11 7"><path d="M0.7 0.8L5.5 5.6L10.300 0.8" fill="none" stroke="#555" stroke-width="1.2"/></svg></div>
<div class="lb" style="left:162.5px;top:30px;color:#5be35b">左宽</div>
<div class="in" style="left:200.300px">120</div>
<div class="lb" style="left:255.5px;top:30px;color:#f238f2">右宽</div>
<div class="in" style="left:289.5px;border-color:#3a84d8;box-shadow:inset 0 0 0 0.5px #9cc3ee">120</div>
<svg class="abs" style="left:312px;top:34px" width="10" height="18" viewBox="0 0 10 18"><path d="M2 1.500Q4.500 1.500 5 3Q5.500 1.500 8 1.500M5 3V15.500M3 16.500H7" stroke="#5a4a3a" stroke-width="1.300" fill="none"/></svg>
<div id="lst">
<div class="r" style="top:0.5px">0</div><div class="r" style="left:85.5px;top:0.5px">60</div>
<div class="r" style="top:13.2px">0</div><div class="r" style="left:85.5px;top:13.2px">120</div>
<div class="r" style="top:25.9px">0</div><div class="r" style="left:85.5px;top:25.9px">180</div>
<div class="r" style="top:38.6px">0</div><div class="r" style="left:85.5px;top:38.6px">200</div>
<div class="r" style="top:51.3px">0</div><div class="r" style="left:85.5px;top:51.3px">240</div>
<div class="abs" style="left:153.5px;top:0;width:17.5px;height:60px;background:#f7f7f7"></div>
<div class="abs" style="left:154.5px;top:18.5px;width:15.5px;height:17.5px;background:#c9c9c9"></div>
<svg class="abs" style="left:157.5px;top:6.5px" width="10" height="7" viewBox="0 0 10 7"><path d="M0.8 5.8L5 1.4L9.2 5.8" fill="none" stroke="#555" stroke-width="1.5"/></svg>
<svg class="abs" style="left:157.5px;top:48.5px" width="10" height="7" viewBox="0 0 10 7"><path d="M0.8 1.2L5 5.6L9.2 1.2" fill="none" stroke="#555" stroke-width="1.5"/></svg>
</div>
<div class="bt" style="left:162.5px;width:33.1px">左</div>
<div class="bt" style="left:203px;width:33.4px">中</div>
<div class="bt" style="left:245.3px;width:33.4px">右</div>
<div class="bt" style="left:289.4px;width:43.5px">交换</div>
<div class="abs" style="left:0;top:146.5px;width:346px;height:1px;background:#d9d9d9"></div>
<div class="abs" style="left:1px;top:148px;width:19px;height:18px;background:#cce4f7"></div>
<div class="abs" style="left:92px;top:148px;width:19.5px;height:18px;background:#cce4f7"></div>
<svg class="abs" style="left:0;top:148px" width="140" height="18" viewBox="120 170 140 18" fill="none"><path d="M123.500 175.800H137.500M123.500 182.300H137.500" stroke="#2e8a96" stroke-width="2.300"/><path d="M124 179H137" stroke="#e04848" stroke-width="1"/><path d="M142.800 183.500Q149.500 168 156.500 183.500M146 185.500Q149.500 175.500 153.500 185.500" stroke="#2e8a96" stroke-width="2"/><path d="M142.500 181L145.500 184.500M156.800 181L153.800 184.500" stroke="#e04848" stroke-width="1.100"/><rect x="163.300" y="173.500" width="11.500" height="11.500" stroke="#2e7f8a" stroke-width="2.800" fill="#fff"/><rect x="161.800" y="172" width="2.600" height="2.600" fill="#e04848"/><rect x="173.700" y="184" width="2.600" height="2.600" fill="#e04848"/><path d="M181.300 172V187M207.700 172V187" stroke="#9a9a9a" stroke-width="1"/><path d="M190.500 185.500L197 178" stroke="#2f78c8" stroke-width="2.8" stroke-linecap="round"/><path d="M196.500 177.500L199.500 174" stroke="#1f4f8f" stroke-width="4" stroke-linecap="round"/><path d="M216.500 179.300H228.500M222.500 173.300V185.300" stroke="#e03030" stroke-width="1.1"/></svg>
<div class="abs" style="left:112.500px;top:148.500px;font-family:'Liberation Sans',sans-serif;font-weight:bold;font-size:12px;line-height:18px;color:#e81818;width:17px;text-align:center">M</div>
</div>
<div class="abs" style="left:1503.500px;top:19px;width:19.500px;height:660px;background:#f0f0f0"></div>
<div class="abs" style="left:1505.500px;top:401px;width:15.500px;height:16.500px;background:#cdcdcd"></div>
<svg class="abs" style="left:1507.500px;top:25px" width="11" height="7" viewBox="0 0 11 7"><path d="M0.8 6L5.5 1.3L10.200 6" fill="none" stroke="#555" stroke-width="1.5"/></svg>
<svg class="abs" style="left:1507.500px;top:665.500px" width="11" height="7" viewBox="0 0 11 7"><path d="M0.8 1L5.5 5.7L10.200 1" fill="none" stroke="#555" stroke-width="1.5"/></svg>
<div class="abs" style="left:116px;top:679px;width:1406.500px;height:16.500px;background:#f0f0f0"></div>
<div class="abs" style="left:1030px;top:679px;width:5px;height:16.500px;background:#dcdcdc"></div>
<div class="abs" style="left:1468.500px;top:680.500px;width:16.500px;height:14px;background:#cdcdcd"></div>
<svg class="abs" style="left:1043.500px;top:681.500px" width="8" height="11" viewBox="0 0 8 11"><path d="M6.5 1L1.800 5.5L6.5 10" fill="none" stroke="#444" stroke-width="1.6"/></svg>
<svg class="abs" style="left:1491.500px;top:681.500px" width="8" height="11" viewBox="0 0 8 11"><path d="M1.5 1L6.200 5.5L1.5 10" fill="none" stroke="#444" stroke-width="1.6"/></svg>
<svg class="abs" style="left:117px;top:679px" width="250" height="17" viewBox="117 679 250 17"><g fill="#f6f6f6" stroke="#c8c8c8" stroke-width="0.8"><rect x="118.500" y="680" width="15" height="14"/><rect x="133.500" y="680" width="15" height="14"/><rect x="148.500" y="680" width="15" height="14"/><rect x="163.500" y="680" width="15" height="14"/></g><g fill="#666"><path d="M129 683V691.300L123.800 687.150Z"/><rect x="121.800" y="683" width="1.600" height="8.300"/><path d="M144 683V691.300L138.800 687.150Z"/><path d="M153 683V691.300L158.200 687.150Z"/><path d="M167.500 683V691.300L172.700 687.150Z"/><rect x="173" y="683" width="1.600" height="8.300"/></g><path d="M180 679H227.300L222.300 693.800H184.300Z" fill="#000"/><path d="M224.500 693.600H285.600L290.700 679.600M289.500 693.600H350.500L355.500 679.600M224.500 693.600L222.800 691.500M289.500 693.600L287.800 691.500" stroke="#777" stroke-width="1" fill="none"/><text x="203.200" y="691.300" text-anchor="middle" font-family="'Liberation Sans','Noto Sans CJK SC',sans-serif" font-size="12" fill="#f0f0f0">模型</text><text x="232.400" y="691" font-family="'Liberation Mono',monospace" font-size="11" fill="#3a3a3a">Layout1</text><text x="296.800" y="691" font-family="'Liberation Mono',monospace" font-size="11" fill="#3a3a3a">Layout2</text></svg>
<div class="abs" style="left:88px;top:695.500px;width:1452px;height:5px;background:linear-gradient(#676767,#7e7e7e)"></div>
<div class="abs" style="left:116px;top:700.500px;width:1424px;height:21.500px;background:#c8c8c8;border-bottom:1px solid #b4b4b4;box-sizing:border-box"></div>
<div class="abs" style="left:91.500px;top:696px;width:24.500px;height:43px;background:linear-gradient(#6a6a6a,#727272)"></div>
<svg class="abs" style="left:91.500px;top:700px" width="25" height="39" viewBox="0 0 25 39"><g fill="#8a8a8a"><rect x="3" y="4" width="1.600" height="1.600"/><rect x="3" y="7.2" width="1.600" height="1.600"/><rect x="6.2" y="4" width="1.600" height="1.600"/><rect x="6.2" y="7.2" width="1.600" height="1.600"/><rect x="9.4" y="4" width="1.600" height="1.600"/><rect x="9.4" y="7.2" width="1.600" height="1.600"/><rect x="12.6" y="4" width="1.600" height="1.600"/><rect x="12.6" y="7.2" width="1.600" height="1.600"/><rect x="15.8" y="4" width="1.600" height="1.600"/><rect x="15.8" y="7.2" width="1.600" height="1.600"/><rect x="19" y="4" width="1.600" height="1.600"/><rect x="19" y="7.2" width="1.600" height="1.600"/></g><path d="M7.500 19.500L15 27M15 19.500L7.500 27" stroke="#f0f0f0" stroke-width="2" fill="none"/></svg>
<div id="cmd" class="abs"><div class="abs" style="left:4.500px;top:3.500px;width:15px;height:13px;background:#e0e0e4;border:1px solid #b4b4bc;border-radius:2px"></div><svg class="abs" style="left:6px;top:6px" width="26" height="10" viewBox="0 0 26 10"><path d="M2 1.500L6 5L2 8.500" stroke="#667" stroke-width="1.300" fill="none"/><path d="M7.500 9H11" stroke="#667" stroke-width="1.200"/><path d="M19 5H25L22 8.500Z" fill="#666"/></svg><div class="tx"><b style="font-size:15px">TWALL</b> 起点或 [<span style="background:#d2d2d2;padding:0 1px">参考点(<span style="color:#2233cc">R</span>)</span>]&lt;退出&gt;:</div></div>
<div class="abs" style="left:1527px;top:17.500px;width:13px;height:341px;background:#ececec"></div>
<div class="abs" style="left:1527px;top:17.500px;width:13px;height:7px;background:#7a7a7a"></div>
<div class="abs" style="left:1527px;top:365px;width:13px;height:120px;background:#ececec"></div>
<div class="abs" style="left:1527px;top:365px;width:13px;height:4px;background:#8a8a8a"></div>
<svg class="abs" style="left:1527px;top:24px" width="13" height="462" viewBox="0 0 13 462" fill="none" stroke-width="1.300">
<g transform="translate(0 2.00)"><path d="M3 13L12 2" stroke="#a8703a" stroke-width="3"/><path d="M2 14.500H13" stroke="#888"/><circle cx="3.500" cy="12.500" r="1.800" fill="#c84020"/></g>
<g transform="translate(0 20.65)"><circle cx="4" cy="5" r="2.300" stroke="#555"/><path d="M7 5H13" stroke="#555"/><circle cx="11" cy="11" r="3" fill="#8cc0ee" stroke="#3f86c8"/></g>
<g transform="translate(0 39.30)"><path d="M2 14L8 1V14Z" stroke="#555" fill="#ddd"/><path d="M10.500 1V14H13" stroke="#3f86c8" fill="#8cc0ee"/></g>
<g transform="translate(0 57.95)"><path d="M3 13Q0 9 4 7Q6 2 13 4V13Z" fill="#8cc0ee" stroke="#3a5a88" stroke-width="1.500"/></g>
<g transform="translate(0 76.60)"><rect x="2.500" y="2.500" width="4.500" height="4.500" stroke="#555" fill="#fff"/><rect x="9.500" y="2.500" width="4.500" height="4.500" stroke="#3f86c8" fill="#8cc0ee"/><rect x="2.500" y="9.500" width="4.500" height="4.500" stroke="#3f86c8" fill="#8cc0ee"/><rect x="9.500" y="9.500" width="4.500" height="4.500" stroke="#3f86c8"/></g>
<g transform="translate(0 95.25)"><path d="M1 8H13M9 1V15M7 3L9 1L11 3M7 13L9 15L11 13M3 6L1 8L3 10" stroke="#333" stroke-width="1.500"/></g>
<g transform="translate(0 113.90)"><path d="M13 3Q4 2 4 9Q4 15 13 14" stroke="#444" stroke-width="1.500"/><path d="M9 0L13 3L9 6" stroke="#444"/></g>
<g transform="translate(0 132.55)"><path d="M2 2H13" stroke="#3f86c8" stroke-width="2.200"/><rect x="3.500" y="6.500" width="6" height="6" stroke="#555" fill="#fff"/><path d="M2 5V14" stroke="#3f86c8"/></g>
<g transform="translate(0 151.20)"><rect x="3.500" y="1.500" width="10" height="13" stroke="#555" fill="#fff"/><path d="M8 11H13" stroke="#3f86c8" stroke-width="2"/></g>
<g transform="translate(0 169.85)"><path d="M2 11L9 3M4 8H13" stroke="#3f86c8" stroke-width="1.500"/></g>
<g transform="translate(0 188.50)"><path d="M2 7H13" stroke="#555" stroke-width="1.400"/><path d="M10 4V10" stroke="#3f86c8" stroke-width="1.600"/></g>
<g transform="translate(0 207.15)"><rect x="3.500" y="3.500" width="10" height="9" stroke="#444" fill="#fff" stroke-width="1.500"/></g>
<g transform="translate(0 225.80)"><path d="M3.500 14V4H13" stroke="#444" stroke-width="1.500"/><circle cx="6" cy="3.500" r="1.100" fill="#3f86c8" stroke="#3f86c8"/><circle cx="11" cy="3.500" r="1.100" fill="#3f86c8" stroke="#3f86c8"/></g>
<g transform="translate(0 244.45)"><path d="M2 8H13M6 5L9 8L6 11M10 5V11" stroke="#3f86c8" stroke-width="1.500"/></g>
<g transform="translate(0 263.10)"><path d="M3 14V9L9 3H13" stroke="#555" stroke-width="1.400" fill="#fff"/><path d="M3 14H13" stroke="#555"/></g>
<g transform="translate(0 281.75)"><path d="M3 14V10Q4 3 13 3" stroke="#3f86c8" stroke-width="1.500"/><path d="M3 14H13" stroke="#555"/></g>
<g transform="translate(0 300.40)"><path d="M2 12Q3 4 7 8T13 6" stroke="#3f86c8" stroke-width="1.400"/><path d="M2 6V14" stroke="#555"/></g>
<g transform="translate(0 319.05)"><path d="M3 6L8 3L13 5V13H3Z" fill="#8cc0ee" stroke="#3f86c8" stroke-width="1.400"/><circle cx="5" cy="11" r="2" fill="#fff" stroke="#3f86c8"/></g>
<g transform="translate(0 346.50)"><rect x="3.500" y="1.500" width="9" height="7" fill="#fff" stroke="#555"/><rect x="7.500" y="6" width="7" height="6" fill="#ddd" stroke="#555"/></g>
<g transform="translate(0 365.20)"><rect x="3.500" y="1.500" width="9" height="7" fill="#fff" stroke="#555"/><rect x="7.500" y="6" width="7" height="6" fill="#ddd" stroke="#555"/></g>
<g transform="translate(0 383.90)"><rect x="3.500" y="1.500" width="9" height="7" fill="#fff" stroke="#555"/><rect x="7.500" y="6" width="7" height="6" fill="#ddd" stroke="#555"/></g>
<g transform="translate(0 402.60)"><rect x="3.500" y="1.500" width="9" height="7" fill="#fff" stroke="#555"/><rect x="7.500" y="6" width="7" height="6" fill="#ddd" stroke="#555"/></g>
<g transform="translate(0 424.00)"><path d="M3 8H13M5 4V12M9 4V12" stroke="#555"/></g>
<g transform="translate(0 441.00)"><rect x="3.500" y="4.500" width="9" height="6" fill="#99a" stroke="#556"/><path d="M6 11V14H13" stroke="#556"/></g>
</svg>
<div class="abs" style="left:1294px;top:690.500px;width:106px;height:30px;background:#fff;border:1px solid #4a90d9;box-sizing:border-box"></div>
<div class="abs" style="left:1302.500px;top:695.500px;width:18px;height:20px;line-height:20px;font-size:16px;color:#1f6fd0;text-align:center">英</div>
<svg class="abs" style="left:1322px;top:695px" width="74" height="22" viewBox="1322 695 74 22"><path d="M1338.250 698.640A8.500 8.500 0 1 1 1326.640 710.250A9 9 0 0 0 1338.250 698.640Z" fill="#1f6fd0"/><circle cx="1357" cy="703.500" r="1.700" fill="#1f6fd0"/><path d="M1362 706.500Q1363.500 709 1361.500 712" stroke="#1f6fd0" stroke-width="1.600" fill="none"/><g transform="translate(1381.5 706)"><circle r="4.600" fill="none" stroke="#1f6fd0" stroke-width="2.200"/><path d="M0 -5.200V-8.500" stroke="#1f6fd0" stroke-width="3" transform="rotate(0)"/><path d="M0 -5.200V-8.500" stroke="#1f6fd0" stroke-width="3" transform="rotate(45)"/><path d="M0 -5.200V-8.500" stroke="#1f6fd0" stroke-width="3" transform="rotate(90)"/><path d="M0 -5.200V-8.500" stroke="#1f6fd0" stroke-width="3" transform="rotate(135)"/><path d="M0 -5.200V-8.500" stroke="#1f6fd0" stroke-width="3" transform="rotate(180)"/><path d="M0 -5.200V-8.500" stroke="#1f6fd0" stroke-width="3" transform="rotate(225)"/><path d="M0 -5.200V-8.500" stroke="#1f6fd0" stroke-width="3" transform="rotate(270)"/><path d="M0 -5.200V-8.500" stroke="#1f6fd0" stroke-width="3" transform="rotate(315)"/></g></svg>
<svg class="abs" style="left:0;top:0" width="1540" height="13" viewBox="0 0 1540 13" fill="none" stroke-width="1.200">
<circle cx="162.100" cy="3.700" r="4.500" stroke="#9c9c9c" stroke-width="1.800"/><circle cx="162.100" cy="3.700" r="1.700" stroke="#9c9c9c" stroke-width="1.100"/><g stroke="#9c9c9c" stroke-width="2.300"><path d="M162.100 -1.600V-3" transform="rotate(0 162.100 3.700)"/><path d="M162.100 -1.600V-3" transform="rotate(45 162.100 3.700)"/><path d="M162.100 -1.600V-3" transform="rotate(90 162.100 3.700)"/><path d="M162.100 -1.600V-3" transform="rotate(135 162.100 3.700)"/><path d="M162.100 -1.600V-3" transform="rotate(180 162.100 3.700)"/><path d="M162.100 -1.600V-3" transform="rotate(225 162.100 3.700)"/><path d="M162.100 -1.600V-3" transform="rotate(270 162.100 3.700)"/><path d="M162.100 -1.600V-3" transform="rotate(315 162.100 3.700)"/></g>
<rect x="176" y="-2" width="11" height="10" fill="#9aa0a8" stroke="#8a8f98"/><path d="M176 9.500H188" stroke="#888" stroke-dasharray="1.5 1.500"/>
<rect x="193.2" y="0" width="4" height="13" fill="#484848"/><rect x="197.2" y="0" width="2.500" height="13" fill="#686868"/>
<rect x="533.5" y="0" width="4" height="13" fill="#484848"/><rect x="537.5" y="0" width="2.500" height="13" fill="#686868"/>
<rect x="1026.5" y="0" width="4" height="13" fill="#484848"/><rect x="1030.5" y="0" width="2.500" height="13" fill="#686868"/>
<path d="M204 1H210M204 4H210M204 7H210" stroke="#666"/><rect x="210.500" y="2.500" width="5.500" height="7" fill="#9cc4ea" stroke="#456"/>
<path d="M225.500 1Q225.500 -3 228.600 -3Q231.700 -3 231.700 1Q231.700 4 230 5.500V8.500H227.200V5.500Q225.500 4 225.500 1Z" fill="#f2e6a6" stroke="#b8a860"/>
<circle cx="242.900" cy="2.500" r="3.200" fill="#f4e8a0" stroke="#c0a850"/><path d="M242.900 -3V9M237 2.500H249M238.700 -1.700L247.100 6.700M247.100 -1.700L238.700 6.700" stroke="#dccb80" stroke-width="0.800"/>
<rect x="253" y="-1" width="7" height="7" fill="#dcdcdc" stroke="#c4c4c4"/>
<rect x="266" y="2" width="7.500" height="6.500" fill="#8fb8e0" stroke="#4a78a8"/><path d="M271.500 2V0Q273.500 -3 275.500 0" stroke="#4a78a8"/>
<rect x="280.300" y="0" width="7.800" height="7.300" fill="#fff" stroke="#3a3a3a" stroke-width="1.500"/>
<path d="M477 4L483 1L489 4L483 7Z" fill="#7fb0e0" stroke="#3a6898"/><path d="M477 7L483 10L489 7" stroke="#3a6898"/>
<path d="M498 -1H505V8H498Z" fill="#ddd" stroke="#777"/><path d="M501 2H508V11H501Z" fill="#eee" stroke="#777"/>
<path d="M517 0H523M517 3H523" stroke="#666"/><rect x="521.500" y="3.500" width="6" height="6.500" fill="#c8d8ec" stroke="#456"/>
<rect x="545.500" y="-1" width="8" height="8" fill="#fff" stroke="#555" stroke-width="1.300"/>
<g transform="translate(1044 0)"><rect x="-6" y="-2" width="12" height="10" fill="#d8dce8" stroke="#556"/><path d="M-4 5H4" stroke="#44a" stroke-width="2"/></g>
<g transform="translate(1063.5 0)"><path d="M-5 6L3 -2L6 1L-2 8Z" fill="#e8e0c0" stroke="#776"/><path d="M-6 9H2" stroke="#48a"/></g>
<g transform="translate(1082.5 0)"><path d="M-6 2L0 -1L6 2L0 5Z M-6 5L0 8L6 5 M-6 7.500L0 10.500L6 7.500" fill="#9cc0e0" stroke="#6a90b8"/></g>
<g transform="translate(1101 0)"><path d="M-6 1H6M-6 6H6M-3 -3V10M3 -3V10" stroke="#e02828" stroke-width="1.400"/></g>
<g transform="translate(1120 0)"><rect x="-3.500" y="-3" width="7" height="12" fill="#3a68a8"/><path d="M-6 3H6M0 -3V11" stroke="#d03030"/></g>
<g transform="translate(1140 0)"><path d="M-6 1H6V7H-1V4H-6Z" fill="#3a68a8"/><path d="M-6 5.500H-1" stroke="#d03030"/></g>
<g transform="translate(1160 0)"><rect x="-5" y="-3" width="10" height="8" fill="#e03838"/><path d="M-7 8H7" stroke="#3a78c8" stroke-width="2.400"/></g>
<g transform="translate(1179 0)"><rect x="-5" y="-1" width="8" height="9" fill="#f4d0d0" stroke="#d03030"/><rect x="-2" y="-3" width="8" height="9" fill="#f4d0d0" stroke="#d03030"/></g>
<g transform="translate(1198.5 0)"><rect x="-5" y="-3" width="10" height="13" fill="#7fb0e0" stroke="#4a80b8"/><path d="M-2 -3V10M2 -3V10" stroke="#4a80b8"/></g>
<g transform="translate(1217.5 0)"><path d="M-5 10V-1H5V10" stroke="#3a68a8" stroke-width="2.600"/><rect x="-2.500" y="1" width="5" height="9" fill="#a8c8e8"/></g>
<g transform="translate(1237.5 0)"><path d="M-5 10V-2M5 10V-2" stroke="#3a68a8" stroke-width="2.600"/><path d="M-4 2Q0 6 4 2V10H-4Z" fill="#6aa0d8"/></g>
<g transform="translate(1256 0)"><rect x="-6.500" y="-3" width="13" height="10" fill="#f0c020" stroke="#a07810"/><path d="M-6.500 -3L0 3L6.500 -3" stroke="#a07810"/></g>
<g transform="translate(1276 0)"><rect x="-6" y="-1" width="12" height="9" fill="#f0c8d0" stroke="#d04060"/><path d="M-3 5L0 0L3 5Z" stroke="#3a68a8"/></g>
<g transform="translate(1296 0)"><path d="M-2 7L5 -2" stroke="#555" stroke-width="2"/><path d="M-7 8.500H4" stroke="#2a68c0" stroke-width="1.600"/><circle cx="-6" cy="8.500" r="1.500" fill="#2a68c0"/></g>
<g transform="translate(1315 0)"><path d="M-5 -2Q-5 -4 -2 -4H4V8H-5Z" fill="#f4f4f4" stroke="#888"/><path d="M-1 0H6V10H-1Z" fill="#fafafa" stroke="#888"/></g>
<g transform="translate(1335 0)"><rect x="-6" y="-2" width="12" height="10" fill="#e8eef8" stroke="#567"/><rect x="0" y="-1" width="5" height="5" fill="#e87830"/><path d="M-5 2H0M-5 5H5" stroke="#3a68a8"/></g>
<g transform="translate(1354 0)"><path d="M-5 -2H5L2 3H-2Z" fill="#ccc" stroke="#555"/><path d="M0 3V8M-4 8.500H4" stroke="#555"/></g>
<g transform="translate(1374 0)"><path d="M-3 -3V10M-3 0H5M-3 3H5M-3 6H3" stroke="#333" stroke-width="1.400"/></g>
<g transform="translate(1393.5 0)"><path d="M-1 7L2.500 -3L6 7M0.500 4H5" stroke="#333" stroke-width="1.400"/><path d="M-7 9H6M-7 7V11" stroke="#333"/></g>
<g transform="translate(1412.5 0)"><circle cx="0" cy="3" r="5.500" stroke="#333" stroke-width="1.400"/><path d="M0 -4V10M-7 3H7" stroke="#333"/></g>
<g transform="translate(1432.5 0)"><circle cx="0" cy="2.500" r="6.500" fill="#2a6ad8"/><circle cx="-1" cy="0.500" r="3.500" fill="#6aa4f4"/><path d="M-2 0Q0 -3 2 0Q2 2 0 3.500" stroke="#fff" stroke-width="1.500"/></g>
</svg>
</body></html>
